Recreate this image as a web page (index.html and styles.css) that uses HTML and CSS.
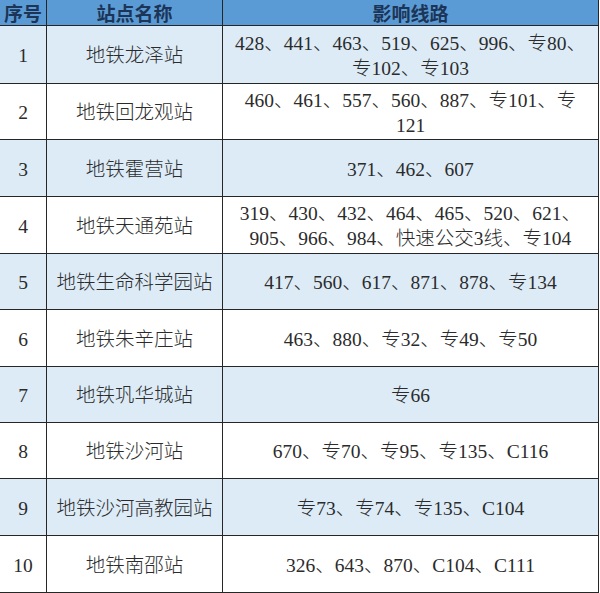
FILE: index.html
```html
<!DOCTYPE html>
<html lang="zh-CN">
<head>
<meta charset="utf-8">
<title>影响线路</title>
<link rel="stylesheet" href="styles.css">
</head>
<body>
<div class="table">
  <div class="cell head">序号</div>
  <div class="cell head">站点名称</div>
  <div class="cell head">影响线路</div>

  <div class="cell num shade">1</div>
  <div class="cell name shade">地铁龙泽站</div>
  <div class="cell lines shade">428、441、463、519、625、996、专80、专102、专103</div>

  <div class="cell num">2</div>
  <div class="cell name">地铁回龙观站</div>
  <div class="cell lines">460、461、557、560、887、专101、专121</div>

  <div class="cell num shade">3</div>
  <div class="cell name shade">地铁霍营站</div>
  <div class="cell lines shade">371、462、607</div>

  <div class="cell num">4</div>
  <div class="cell name">地铁天通苑站</div>
  <div class="cell lines">319、430、432、464、465、520、621、905、966、984、快速公交3线、专104</div>

  <div class="cell num shade">5</div>
  <div class="cell name shade">地铁生命科学园站</div>
  <div class="cell lines shade">417、560、617、871、878、专134</div>

  <div class="cell num">6</div>
  <div class="cell name">地铁朱辛庄站</div>
  <div class="cell lines">463、880、专32、专49、专50</div>

  <div class="cell num shade">7</div>
  <div class="cell name shade">地铁巩华城站</div>
  <div class="cell lines shade">专66</div>

  <div class="cell num">8</div>
  <div class="cell name">地铁沙河站</div>
  <div class="cell lines">670、专70、专95、专135、C116</div>

  <div class="cell num shade">9</div>
  <div class="cell name shade">地铁沙河高教园站</div>
  <div class="cell lines shade">专73、专74、专135、C104</div>

  <div class="cell num">10</div>
  <div class="cell name">地铁南邵站</div>
  <div class="cell lines">326、643、870、C104、C111</div>
</div>
</body>
</html>
```

FILE: styles.css
```css
html, body {
  margin: 0;
  padding: 0;
  background: #ffffff;
}

.table {
  display: grid;
  width: 599px;
  grid-template-columns: 47px 176px 376px;
  grid-template-rows: 26px 58px 56px 57px 57px 56px 57px 56px 56px 57px 57px;
  font-family: "Liberation Serif", "Noto Sans CJK SC", serif;
  font-size: 19.5px;
  font-weight: 300;
  color: #2b2b2b;
}

.cell {
  box-sizing: border-box;
  border-right: 1px solid #262626;
  border-bottom: 1px solid #262626;
  display: flex;
  align-items: center;
  justify-content: center;
  text-align: center;
  padding: 2px 8px 0;
  line-height: 25px;
}

.num, .name {
  padding-left: 0;
  padding-right: 0;
}

.head {
  background: #5b9bd5;
  color: #1c3557;
  font-family: "Noto Sans CJK SC", sans-serif;
  font-weight: 700;
  font-size: 19px;
  line-height: 24px;
  padding: 0;
}

.shade {
  background: #ddebf7;
}

.lines {
  word-break: normal;
  line-break: normal;
}
```
